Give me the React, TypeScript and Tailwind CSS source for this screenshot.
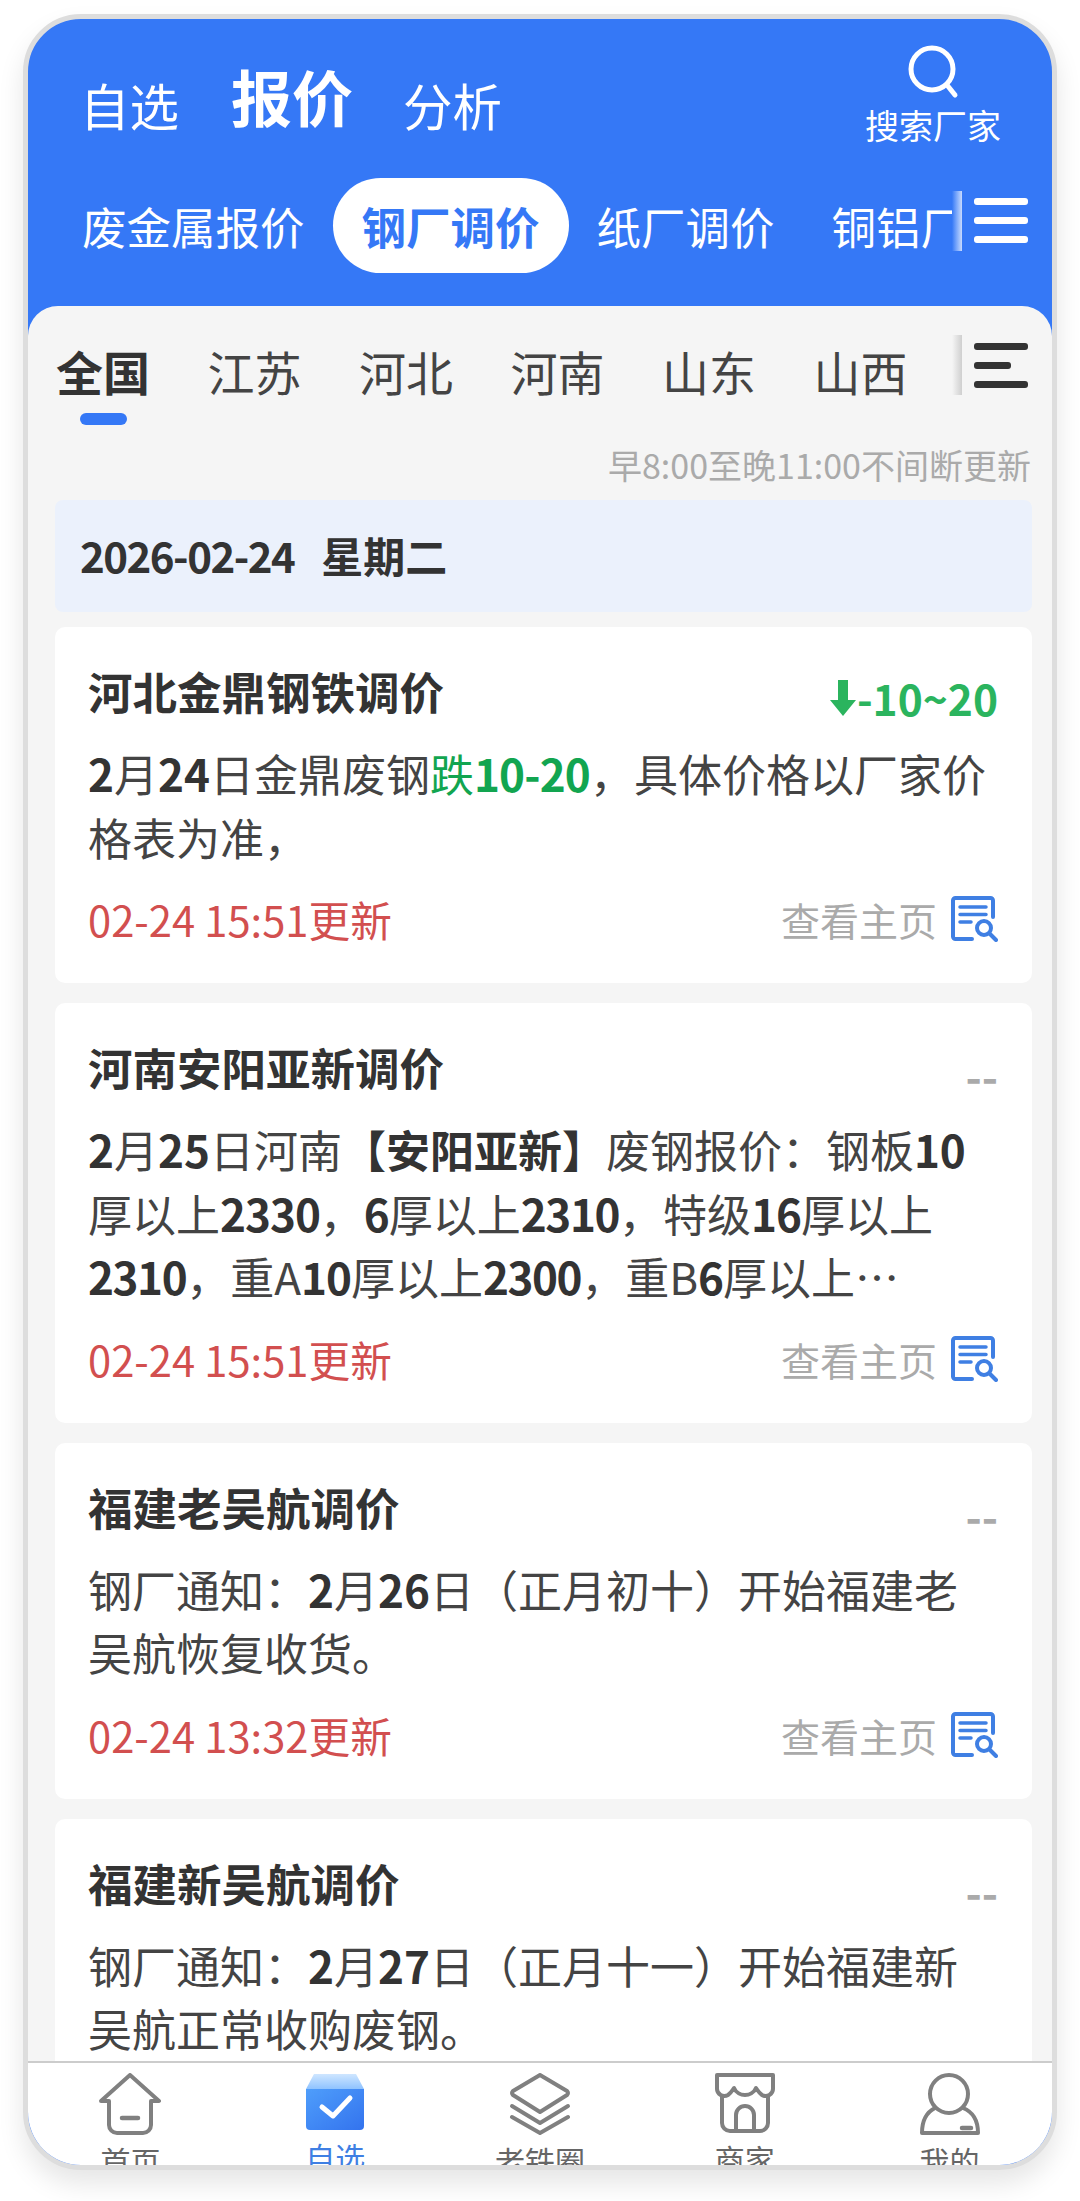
import React from "react";

const B = ({ children }: { children: React.ReactNode }) => <b className="font-bold text-[#333]">{children}</b>;
const N = ({ children }: { children: React.ReactNode }) => <b className="font-bold tracking-[-1px] text-[#333]">{children}</b>;
const N4 = ({ children }: { children: React.ReactNode }) => <b className="font-bold tracking-[-1.4px] text-[#333]">{children}</b>;

function DocIcon() {
  return (
    <svg width="47" height="46" viewBox="0 0 47 46" fill="none" stroke="#3f7fe3" strokeLinecap="round" strokeLinejoin="round">
      <path d="M21 43H4.500a2.500 2.500 0 0 1-2.500-2.500V4.500A2.500 2.500 0 0 1 4.500 2H39.500A2.500 2.500 0 0 1 42 4.500V21" strokeWidth="4" />
      <path d="M9 11H35M9 18.500H35M9 26H20" strokeWidth="3.500" />
      <circle cx="33" cy="32" r="7" strokeWidth="4" />
      <path d="M38.500 37.500L45 44" strokeWidth="4" />
    </svg>
  );
}

function Hamburger({ light }: { light?: boolean }) {
  const c = light ? "bg-white" : "bg-[#333]";
  return (
    <div className="flex w-[54px] flex-col gap-[12px]">
      <div className={`h-[7px] w-full rounded-[3px] ${c}`} />
      <div className={`h-[7px] rounded-[3px] ${c} ${light ? "w-full" : "w-[37px]"}`} />
      <div className={`h-[7px] w-full rounded-[3px] ${c}`} />
    </div>
  );
}

function Card({ title, right, lines, time }: { title: string; right: React.ReactNode; lines: React.ReactNode[]; time: string }) {
  return (
    <div className="shrink-0 rounded-[10px] bg-white pb-[39px] pl-[33px] pr-[34px] pt-[41px]">
      <div className="flex h-[46px] items-center justify-between">
        <div className="text-[44.5px] font-bold leading-[46px] text-[#333]">{title}</div>
        {right}
      </div>
      <div className="mt-[28px] text-[44px] leading-[63.5px] text-[#444]">
        {lines.map((l, i) => (
          <div key={i} className="whitespace-nowrap">{l}</div>
        ))}
      </div>
      <div className="mt-[25px] flex h-[50px] items-center justify-between">
        <div className="text-[41.7px] leading-[50px] text-[#d24f4f]">{time}</div>
        <div className="flex items-center gap-[14px]">
          <span className="text-[39px] leading-[50px] text-[#aaaaaa]">查看主页</span>
          <DocIcon />
        </div>
      </div>
    </div>
  );
}

const Dash = () => <div className="mt-[16px] text-[44px] font-bold leading-[46px] text-[#aaaaaa]">--</div>;

function NavItem({ label, active, children }: { label: string; active?: boolean; children: React.ReactNode }) {
  return (
    <div className="flex flex-1 flex-col items-center pt-[10px]">
      <div className="flex h-[62px] items-center justify-center">{children}</div>
      <div className={`mt-[10px] whitespace-nowrap text-[30px] leading-[30px] ${active ? "text-[#3f7fe3]" : "text-[#666]"}`}>{label}</div>
    </div>
  );
}

export default function App() {
  return (
    <div className="h-[2201px] w-[1080px] overflow-hidden bg-white pl-[23px] pt-[14px] font-['Noto_Sans_CJK_SC','Noto_Sans',sans-serif]">
      <div className="flex h-[2156px] w-[1034px] flex-col overflow-hidden rounded-[58px] border-[5px] border-[#dddddd] bg-[#3578f6] shadow-[0_14px_26px_rgba(0,0,0,0.10)]">
        {/* header */}
        <div className="shrink-0 text-white">
          <div className="flex h-[159px] items-start justify-between pl-[52px] pr-[51px]">
            <div className="flex items-end pt-[42px]">
              <span className="text-[49.5px] leading-[64px]">自选</span>
              <span className="mb-[6px] ml-[52px] text-[61px] font-bold leading-[70px]">报价</span>
              <span className="ml-[50px] text-[49.5px] leading-[64px]">分析</span>
            </div>
            <div className="flex flex-col items-center pt-[26px]">
              <svg width="56" height="56" viewBox="0 0 56 56" fill="none" stroke="#fff" strokeWidth="5" strokeLinecap="round">
                <circle cx="27" cy="24" r="21" />
                <path d="M42 40L50 50" />
              </svg>
              <span className="mt-[2px] text-[34px] leading-[44px]">搜索厂家</span>
            </div>
          </div>
          <div className="flex h-[95px] items-center">
            <div className="flex min-w-0 flex-1 items-center gap-[28px] overflow-hidden pl-[54px] text-[44.5px] leading-[60px]">
              <span className="shrink-0 whitespace-nowrap">废金属报价</span>
              <span className="flex h-[95px] shrink-0 items-center whitespace-nowrap rounded-[48px] bg-white px-[29px] font-bold text-[#3578f6]">钢厂调价</span>
              <span className="shrink-0 whitespace-nowrap">纸厂调价</span>
              <span className="ml-[29px] shrink-0 whitespace-nowrap">铜铝厂调价</span>
            </div>
            <div className="mb-[10px] h-[60px] w-[10px] shrink-0 bg-gradient-to-r from-[#3578f6] to-[#c9dafc]" />
            <div className="mb-[10px] ml-[12px] mr-[24px] shrink-0">
              <Hamburger light />
            </div>
          </div>
        </div>

        {/* content */}
        <div className="mt-[33px] flex min-h-0 flex-1 flex-col overflow-hidden rounded-t-[30px] bg-[#f5f5f5]">
          <div className="flex h-[134px] shrink-0 items-start pt-[35px]">
            <div className="flex min-w-0 flex-1 items-start gap-[57.5px] overflow-hidden pl-[28px] text-[47px] leading-[60px] text-[#444]">
              <div className="flex shrink-0 flex-col items-center">
                <span className="font-bold text-[#333]">全国</span>
                <div className="mt-[12px] h-[12px] w-[47px] rounded-[6px] bg-[#3578f6]" />
              </div>
              <span className="shrink-0">江苏</span>
              <span className="shrink-0">河北</span>
              <span className="shrink-0">河南</span>
              <span className="shrink-0">山东</span>
              <span className="shrink-0">山西</span>
            </div>
            <div className="-mt-[6px] h-[60px] w-[10px] shrink-0 bg-gradient-to-r from-[#f5f5f5] to-[#cfcfcf]" />
            <div className="ml-[12px] mr-[24px] shrink-0 pt-[2px]">
              <Hamburger />
            </div>
          </div>
          <div className="shrink-0 pr-[21px] text-right text-[34px] leading-[50px] text-[#aaaaaa]">早8:00至晚11:00不间断更新</div>
          <div className="flex min-h-0 flex-1 flex-col gap-[20px] overflow-hidden pl-[27px] pr-[20px] pt-[10px]">
            <div className="-mb-[5px] flex h-[112px] shrink-0 items-center rounded-[8px] bg-[#ebf1fc] pb-[4px] pl-[25px] text-[42px] font-bold text-[#333]">
              <span className="tracking-[-1.5px]">2026-02-24</span>
              <span className="ml-[27px]">星期二</span>
            </div>
            <Card
              title="河北金鼎钢铁调价"
              right={
                <div className="mt-[14px] flex items-center text-[42.5px] font-bold leading-[46px] text-[#2bb45e]">
                  <svg width="28" height="40" viewBox="0 0 28 40" fill="#2bb45e">
                    <path d="M9 2H19V22H27L14 38L1 22H9Z" />
                  </svg>
                  -10~20
                </div>
              }
              lines={[
                <>
                  <B>2</B>月<B>24</B>日金鼎废钢<span className="text-[#12a550]">跌<b className="font-bold tracking-[-0.8px]">10-20</b></span>，具体价格以厂家价
                </>,
                "格表为准，",
              ]}
              time="02-24 15:51更新"
            />
            <Card
              title="河南安阳亚新调价"
              right={<Dash />}
              lines={[
                <>
                  <B>2</B>月<B>25</B>日河南<B>【安阳亚新】</B>废钢报价：钢板<B>10</B>
                </>,
                <>
                  厚以上<N>2330</N>，<N>6</N>厚以上<N4>2310</N4>，特级<N>16</N>厚以上
                </>,
                <>
                  <N4>2310</N4>，重A<N>10</N>厚以上<N4>2300</N4>，重B<N>6</N>厚以上…
                </>,
              ]}
              time="02-24 15:51更新"
            />
            <Card
              title="福建老吴航调价"
              right={<Dash />}
              lines={[
                <>
                  钢厂通知：<B>2</B>月<B>26</B>日（正月初十）开始福建老
                </>,
                "吴航恢复收货。",
              ]}
              time="02-24 13:32更新"
            />
            <Card
              title="福建新吴航调价"
              right={<Dash />}
              lines={[
                <>
                  钢厂通知：<B>2</B>月<B>27</B>日（正月十一）开始福建新
                </>,
                "吴航正常收购废钢。",
              ]}
              time="02-24 13:32更新"
            />
          </div>
        </div>

        {/* bottom nav */}
        <div className="flex h-[104px] shrink-0 overflow-hidden border-t-2 border-[#cccccc] bg-white">
          <NavItem label="首页">
            <svg width="62" height="62" viewBox="0 0 62 62" fill="none" stroke="#808080" strokeWidth="4" strokeLinejoin="round" strokeLinecap="round">
              <path d="M2 28L31 2L60 28H52V52A8 8 0 0 1 44 60H18A8 8 0 0 1 10 52V28Z" />
              <path d="M23 45H39" strokeWidth="4.500" />
            </svg>
          </NavItem>
          <NavItem label="自选" active>
            <svg width="58" height="58" viewBox="0 0 58 58">
              <defs>
                <linearGradient id="t" x1="0" y1="0" x2="0" y2="1">
                  <stop offset="0" stopColor="#cfe6ff" />
                  <stop offset="1" stopColor="#8fc3ff" />
                </linearGradient>
                <linearGradient id="b" x1="0" y1="0" x2="1" y2="1">
                  <stop offset="0" stopColor="#4f9efb" />
                  <stop offset="1" stopColor="#3373ee" />
                </linearGradient>
              </defs>
              <path d="M8 1H50L58 16H0Z" fill="url(#t)" />
              <path d="M0 16H58V53A4 4 0 0 1 54 57H4A4 4 0 0 1 0 53Z" fill="url(#b)" />
              <path d="M16 34L27 43L44 25" fill="none" stroke="#fff" strokeWidth="5" strokeLinecap="round" strokeLinejoin="round" />
            </svg>
          </NavItem>
          <NavItem label="老铁圈">
            <svg width="62" height="62" viewBox="0 0 62 62" fill="none" stroke="#808080" strokeWidth="4" strokeLinejoin="round" strokeLinecap="round">
              <path d="M31 2L58 18Q60 20 58 22L31 39L4 22Q2 20 4 18Z" />
              <path d="M3 33L31 50L59 33" />
              <path d="M3 44L31 60L59 44" />
            </svg>
          </NavItem>
          <NavItem label="商家">
            <svg width="60" height="60" viewBox="0 0 60 60" fill="none" stroke="#808080" strokeWidth="4" strokeLinejoin="round" strokeLinecap="round">
              <path d="M2 2H58V16C58 21 52 25 47 22C44 20 43 18 41 15C39 20 34 22 30 22C26 22 21 20 19 15C17 18 16 20 13 22C8 25 2 21 2 16Z" />
              <path d="M7 24V50A8 8 0 0 0 15 58H45A8 8 0 0 0 53 50V24" />
              <path d="M21 58V42A9 9 0 0 1 39 42V58" />
            </svg>
          </NavItem>
          <NavItem label="我的">
            <svg width="60" height="62" viewBox="0 0 60 62" fill="none" stroke="#808080" strokeWidth="4" strokeLinejoin="round" strokeLinecap="round">
              <circle cx="29" cy="21" r="19" />
              <path d="M15 35C7 39 2 48 2 60H58C58 48 53 39 43 35" />
              <path d="M42 55H51" strokeWidth="4.500" />
            </svg>
          </NavItem>
        </div>
      </div>
    </div>
  );
}
